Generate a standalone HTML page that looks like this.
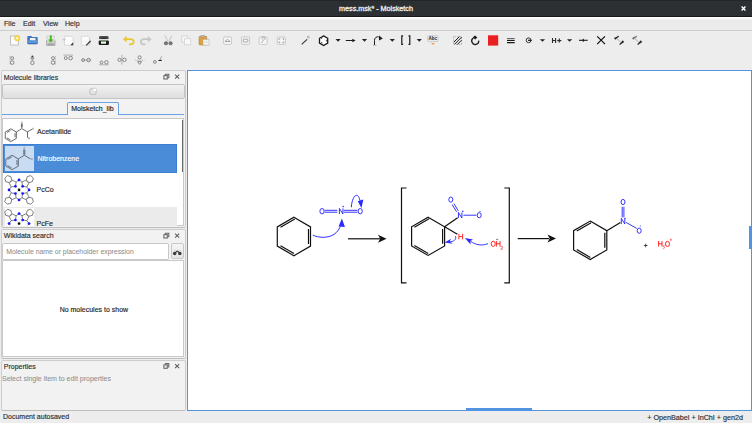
<!DOCTYPE html>
<html><head><meta charset="utf-8">
<style>
*{margin:0;padding:0;box-sizing:border-box}
html,body{width:752px;height:423px;overflow:hidden;background:#ededed;font-family:"Liberation Sans",sans-serif;font-size:7px;color:#2e2e2e;-webkit-text-stroke:0.15px currentColor}
.a{position:absolute}
svg{position:absolute;overflow:visible}
#title{left:0;top:0;width:752px;height:17px;background:#2c3033;border-bottom:1px solid #17191b;box-shadow:inset 0 1px 0 #23272a}
#title .t{left:0;width:752px;top:3.6px;text-align:center;color:#e8e8e8;font-size:7.2px;line-height:10px;padding-left:0;-webkit-text-stroke:0.35px #e8e8e8}
#menubar{left:0;top:17px;width:752px;height:14px;background:linear-gradient(#fefefe 0,#f9f9f9 1.6px,#ebebeb 3.2px);border-bottom:1px solid #cdcdcd}
.menu{top:19.2px;font-size:7.1px;line-height:10px;color:#303030}
.dock{background:#f2f2f2;border:1px solid #cdcdcd;border-bottom-color:#bdbdbd;border-radius:2px}
.dtitle{font-size:7px;line-height:9px;color:#2e2e2e}
.btn{background:linear-gradient(#f2f2f2,#dedede);border:1px solid #c4c4c4;border-radius:2px}
.btn2{background:linear-gradient(#f6f6f6,#e4e4e4);border:1px solid #c8c8c8;border-radius:2px}
.tab{background:#f3f3f3;border:1px solid #6aa2e4;border-bottom:none;border-radius:2px 2px 0 0;font-size:7px;line-height:9px;padding:1.2px 0 0 3px;color:#222}
.list{background:#fff;border:1px solid #c9c9c9}
.item{font-size:7px;line-height:9px;color:#1e1e1e}
.input{background:#fff;border:1px solid #c9c9c9;border-radius:2px;font-size:7px;line-height:16px;padding-left:2.8px;color:#8d8d8d;-webkit-text-stroke:0.05px #8d8d8d}
.canvas{left:187px;top:70px;width:565px;height:341px;background:#fff;border:1px solid #5294e2}
.status{font-size:7px;line-height:9px;color:#2e2e2e}
</style></head><body>
<div id="title" class="a"><div class="t a">mess.msk* - Molsketch</div>
<svg style="left:741px;top:6px" width="5" height="5" viewBox="0 0 5 5"><path d="M0.6 0.6L4.4 4.4M4.4 0.6L0.6 4.4" stroke="#fff" stroke-width="1.4"/></svg>
</div>
<div id="menubar" class="a"></div>
<div class="a menu" style="left:4px">File</div>
<div class="a menu" style="left:23px">Edit</div>
<div class="a menu" style="left:43px">View</div>
<div class="a menu" style="left:65px">Help</div>

<!-- toolbar 1 -->
<svg style="left:0;top:0" width="752" height="70" viewBox="0 0 752 70">
 <!-- new -->
 <rect x="10.5" y="36" width="8" height="9" fill="#fafafa" stroke="#b5b5b5" stroke-width="0.8"/>
 <circle cx="17.2" cy="38.2" r="2.6" fill="#f5e050" stroke="#e8c820" stroke-width="0.7"/>
 <circle cx="17.2" cy="38.2" r="1.1" fill="#fffbe0"/>
 <!-- open -->
 <path d="M27.3 36.9q0-1 1-1h3l0.9 1h4.6q0.9 0 0.9 0.9v5.6h-10.4z" fill="#3d76c0"/>
 <rect x="29.9" y="38" width="5.6" height="2.8" fill="#f4f2ea"/>
 <path d="M27.2 40.2h10.6l-0.5 3.9h-9.6z" fill="#5b94d8"/>
 <path d="M27.8 43.8h9.5" stroke="#2c5ea6" stroke-width="0.9"/>
 <!-- save -->
 <path d="M46.5 40.5h8.5v5h-8.5z" fill="#cfcfcf" stroke="#9a9a9a" stroke-width="0.7"/>
 <rect x="47" y="36" width="7.5" height="5" fill="#e9e9e9" stroke="#bbb" stroke-width="0.5"/>
 <path d="M50.8 35.3v5.2" stroke="#44bb22" stroke-width="2"/>
 <path d="M48 39.5h5.6l-2.8 3z" fill="#44bb22"/>
 <rect x="47.8" y="43.6" width="6" height="1" fill="#888"/>
 <!-- import -->
 <path d="M64.5 36.2h7.5l1.2 1.2v7.8h-8.7z" fill="#fbfbfb" stroke="#c8c8c8" stroke-width="0.6"/>
 <path d="M63 39.6h3M64.3 38.3l-1.3 1.3 1.3 1.3" stroke="#bbb" stroke-width="0.6" fill="none"/>
 <path d="M70.3 45.2l2.9-2.9v2.9z" fill="#333"/>
 <!-- export -->
 <path d="M81.3 36.2h7l1.4 1.4v7.6h-8.4z" fill="#fbfbfb" stroke="#c8c8c8" stroke-width="0.6"/>
 <path d="M88.5 38.6l1.5 1.5-1.5 1.5" stroke="#bbb" stroke-width="0.6" fill="none"/>
 <path d="M86.2 45.4l4.4-4.4" stroke="#333" stroke-width="1.2"/>
 <!-- print -->
 <rect x="99" y="36.1" width="9.6" height="3.4" rx="1.3" fill="#505050"/>
 <rect x="101.3" y="37.7" width="5.2" height="0.9" fill="#1a1a1a"/>
 <rect x="98.7" y="39.2" width="10.2" height="1.4" fill="#f2f2f2"/>
 <rect x="98.7" y="40.5" width="10.2" height="4.5" rx="0.9" fill="#1c1c1c"/>
 <rect x="101" y="41.4" width="5" height="2.3" fill="#fafafa"/>
 <path d="M101.8 41.6h2.8" stroke="#48b038" stroke-width="0.7"/>
 <!-- undo -->
 <path d="M125.5 39.2h5c2.2 0 3.2 1.3 3.2 2.6s-1 2.5-3.2 2.5h-1.5" fill="none" stroke="#e8c832" stroke-width="1.8"/>
 <path d="M123 39.2l3.6-3.2v6.4z" fill="#e8c832"/>
 <!-- redo -->
 <path d="M149 39.2h-5c-2.2 0-3.2 1.3-3.2 2.6s1 2.5 3.2 2.5h1.5" fill="none" stroke="#c6c6c6" stroke-width="1.8"/>
 <path d="M151.5 39.2l-3.6-3.2v6.4z" fill="#c6c6c6"/>
 <!-- cut -->
 <path d="M165 35.5l3 6M171.8 35.5l-3 6" stroke="#c0c0c0" stroke-width="0.9"/>
 <circle cx="166" cy="43.3" r="1.7" fill="#777" stroke="#555" stroke-width="0.5"/>
 <circle cx="170.6" cy="43.3" r="1.7" fill="#777" stroke="#555" stroke-width="0.5"/>
 <!-- copy -->
 <rect x="181.5" y="36" width="6.3" height="6" fill="#f4f4f4" stroke="#cfcfcf" stroke-width="0.7"/>
 <rect x="184.4" y="38.8" width="6.3" height="6" fill="#f8f8f8" stroke="#cfcfcf" stroke-width="0.7"/>
 <!-- paste -->
 <rect x="199" y="36.3" width="7.8" height="8.7" rx="0.8" fill="#e0a040" stroke="#b77a20" stroke-width="0.5"/>
 <rect x="201" y="35.5" width="3.6" height="1.8" fill="#bbb" stroke="#888" stroke-width="0.4"/>
 <rect x="203" y="39.5" width="6" height="5.6" fill="#f6f6f6" stroke="#aaa" stroke-width="0.5"/>
 <path d="M204.2 41.3h3.6M204.2 42.7h3.6" stroke="#bbb" stroke-width="0.4"/>
 <!-- zoom boxes -->
 <g fill="#f6f6f6" stroke="#b9b9b9" stroke-width="0.7">
  <rect x="223.6" y="36.9" width="8" height="7.5" rx="1.2"/>
  <rect x="241.6" y="36.9" width="8" height="7.5" rx="1.2"/>
  <rect x="259.2" y="36.9" width="8" height="7.5" rx="1.2"/>
  <rect x="277.3" y="36.9" width="8" height="7.5" rx="1.2"/>
 </g>
 <g fill="none" stroke="#777" stroke-width="0.6">
  <path d="M225 41.5l2.6-2.2 2.6 2.2M225 41.5h5.2"/>
  <rect x="243.3" y="39.2" width="4.6" height="2.8" rx="0.6"/>
  <path d="M261.5 42.8l2.5-3.5M262.3 39.4a1.6 1.6 0 1 1 2.4 0.3"/>
  <path d="M279 38.7h1.3M279 38.7v1.3M283.6 38.7h-1.3M283.6 38.7v1.3M279 42.7h1.3M279 42.7v-1.3M283.6 42.7h-1.3M283.6 42.7v-1.3"/>
 </g>
 <!-- wand -->
 <path d="M301.7 44.3l5.4-5" stroke="#333" stroke-width="1.1"/>
 <circle cx="308.3" cy="37.2" r="1" fill="none" stroke="#888" stroke-width="0.6"/>
 <!-- hexagon -->
 <path d="M323.6 35.9l4.1 2.4v4.8l-4.1 2.4-4.1-2.4v-4.8z" fill="#fff" stroke="#1a1a1a" stroke-width="1.3"/>
 <path d="M321 38.6l1.4-0.8M326.4 39.8v1.6M322.4 43.2l-1.4-0.8" stroke="#1a1a1a" stroke-width="0.8"/>
 <!-- triangles -->
 <g fill="#222">
  <path d="M335.5 39h5.2l-2.6 2.8z"/>
  <path d="M361.9 39h5.2l-2.6 2.8z"/>
  <path d="M389.7 39h5.2l-2.6 2.8z"/>
  <path d="M416.7 39h5.2l-2.6 2.8z"/>
  <path d="M539.9 39.2h5.2l-2.6 2.6z"/>
  <path d="M567 39.2h5.2l-2.6 2.6z"/>
 </g>
 <!-- arrow -->
 <path d="M345.8 40.5h7" stroke="#1a1a1a" stroke-width="1"/>
 <path d="M355.6 40.5l-3.3-1.8v3.6z" fill="#1a1a1a"/>
 <!-- curved arrow -->
 <path d="M374.5 45v-4.5c0-3 2-4 4.2-3.6" fill="none" stroke="#1a1a1a" stroke-width="1"/>
 <path d="M382.8 38.5l-3.8-3v5z" fill="#1a1a1a"/>
 <path d="M373.4 45.3h0.9M375.4 45.3h0.9" stroke="#555" stroke-width="0.6"/>
 <!-- brackets -->
 <path d="M403.1 35.9h-1.3v8.5h1.3M408.5 35.9h1.3v8.5h-1.3" fill="none" stroke="#1a1a1a" stroke-width="1.2"/>
 <!-- Abc -->
 <rect x="427.7" y="35.7" width="10.4" height="5.9" rx="1" fill="#ececec" stroke="#b8b8b8" stroke-width="0.6"/>
 <text x="428.5" y="40.4" font-size="4.5" font-weight="bold" fill="#222" font-family="Liberation Sans" style="-webkit-text-stroke:0">Abc</text>
 <path d="M430.9 42.5L433 44.9L435.1 42.5L433 43.5Z" fill="#f08a24"/>
 <!-- hatched -->
 <rect x="453.6" y="36.6" width="8" height="7.8" fill="none" stroke="#777" stroke-width="0.6" stroke-dasharray="0.8 0.8"/>
 <path d="M453.8 42.2l5.6-5.6M454.6 44.2l7-7M457.2 44.6l4.4-4.4" stroke="#1a1a1a" stroke-width="1"/>
 <!-- rotate -->
 <path d="M478.7 40.6A3.5 3.5 0 1 1 473.4 38" fill="none" stroke="#1a1a1a" stroke-width="1.3"/>
 <path d="M472.8 37.3l2.2-1.9 2.3 2.1-2.2 2z" fill="#1a1a1a"/>
 <!-- red square -->
 <rect x="488" y="35.3" width="10.2" height="10.3" fill="#ea1f1f"/>
 <!-- lines -->
 <path d="M507 38.7h7.7" stroke="#1a1a1a" stroke-width="0.8"/>
 <path d="M507 40.5h7.7M507 42.6h7.7" stroke="#1a1a1a" stroke-width="1.2"/>
 <!-- charge -->
 <circle cx="528.6" cy="40.3" r="2.4" fill="none" stroke="#222" stroke-width="0.9"/>
 <path d="M528 40.3h3.6" stroke="#111" stroke-width="1.2"/>
 <!-- H+ -->
 <path d="M552.5 38v5M555.6 38v5M552.5 40.5h3.1M557.3 40.6h4M559.3 38.6v4" stroke="#2a2a2a" stroke-width="1.1" fill="none"/>
 <!-- bond -->
 <path d="M579 40.3h8.7" stroke="#1a1a1a" stroke-width="1.1"/>
 <path d="M583.2 38.4l1 1.9-1 1.9-1-1.9z" fill="#1a1a1a"/>
 <!-- X -->
 <path d="M597.2 36.4q4 3.8 7.8 7.7M605 36.4q-4 3.8-7.8 7.7" stroke="#111" stroke-width="1.25" fill="none"/>
 <!-- flips -->
 <path d="M615.20 39.82L619.15 36.48L618.65 35.72L614.00 37.98Z" fill="#2a2a2a"/>
 <path d="M622.77 40.28L619.30 44.27L619.90 44.93L624.23 41.92Z" fill="#2a2a2a"/>
 <path d="M617.3 38.9L620.9 42.3" stroke="#555" stroke-width="0.7" stroke-dasharray="0.9 0.6"/>
 <path d="M633.20 39.82L637.15 36.48L636.65 35.72L632.00 37.98Z" fill="#707070"/>
 <path d="M640.77 40.28L637.30 44.27L637.90 44.93L642.23 41.92Z" fill="#2a2a2a"/>
 <path d="M635.3 38.9L638.9 42.3" stroke="#555" stroke-width="0.7" stroke-dasharray="0.9 0.6"/>
 <!-- toolbar 2: align icons -->
 <g fill="none" stroke="#707070" stroke-width="0.8">
  <circle cx="12.2" cy="58.2" r="1.5"/><circle cx="12.2" cy="62.6" r="1.8"/>
  <circle cx="32.4" cy="58.2" r="1.4"/><circle cx="32.4" cy="62.8" r="1.8"/>
  <circle cx="53" cy="58.2" r="1.5"/><circle cx="53" cy="62.6" r="1.8"/>
  <circle cx="65.8" cy="58.1" r="1.5"/><circle cx="70.6" cy="58.1" r="1.8"/>
  <circle cx="83.2" cy="60.1" r="1.5"/><circle cx="88.6" cy="60.1" r="1.8"/>
  <circle cx="101.5" cy="62.4" r="1.4"/><circle cx="106.4" cy="62.3" r="1.75"/>
  <circle cx="119.5" cy="59.8" r="1.6"/><circle cx="124.4" cy="59.8" r="1.75"/>
  <circle cx="139.6" cy="57.4" r="1.6"/><path d="M137.6 61.6h4l-2 2.8z"/>
  <circle cx="154.9" cy="61.9" r="1.4"/>
 </g>
 <g fill="none" stroke="#888" stroke-width="0.6">
  <path d="M10 56v9" stroke-dasharray="1 0.7"/>
  <path d="M32.4 56v4.6"/>
  <path d="M55.4 56v9" stroke-dasharray="1 0.7"/>
  <path d="M63.4 55.1h9.7"/>
  <path d="M81 60.1h10.2"/>
  <path d="M99 64.8h9.7"/>
  <path d="M121.9 54.8v9.9"/>
  <path d="M134.8 60.2h9.6" stroke-dasharray="1 0.8"/>
 </g>
 <circle cx="32.4" cy="56.3" r="0.9" fill="#333"/>
 <ellipse cx="160.1" cy="60.4" rx="1.9" ry="0.6" fill="#222"/>
 <path d="M160.2 60.1L161.5 56.4" stroke="#999" stroke-width="0.9"/>
</svg>

<!-- left docks -->
<div class="a dock" style="left:1px;top:70px;width:185px;height:158px"></div>
<div class="a dtitle" style="left:3.7px;top:73px">Molecule libraries</div>
<div class="a btn" style="left:2px;top:84px;width:182.5px;height:14.5px"></div>
<svg style="left:0;top:0" width="200" height="423" viewBox="0 0 200 423">
 <!-- refresh icon -->
 <circle cx="93" cy="91.5" r="3.3" fill="none" stroke="#c4c4c4" stroke-width="1.1"/>
 <circle cx="94.6" cy="90" r="1.9" fill="#fff" stroke="#c4c4c4" stroke-width="0.6"/>
</svg>
<!-- tabs -->
<div class="a" style="left:2px;top:113.8px;width:182px;height:1.2px;background:#6aa2e4"></div>
<div class="a tab" style="left:67.2px;top:102.2px;width:51.6px;height:12.8px">Molsketch_lib</div>
<!-- list -->
<div class="a list" style="left:2.4px;top:118px;width:181.6px;height:107.8px"></div>
<div class="a" style="left:3.1px;top:144px;width:173.6px;height:28.6px;background:#4a8cd8;border:1px solid #3b7fd2"></div>
<div class="a" style="left:4.9px;top:146px;width:29.3px;height:24.6px;background:#c9dcf1"></div>
<div class="a" style="left:3.1px;top:207px;width:173.6px;height:18.5px;background:#ebebeb"></div>
<div class="a" style="left:4.5px;top:208px;width:29.5px;height:17.5px;background:#fff"></div>
<div class="a" style="left:182px;top:119.5px;width:1.4px;height:52.5px;background:#6a6a6a"></div>
<div class="a item" style="left:37px;top:127px">Acetanilide</div>
<div class="a item" style="left:37.5px;top:154px;color:#fff">Nitrobenzene</div>
<div class="a item" style="left:36.6px;top:185.2px">PcCo</div>
<div class="a" style="left:2.5px;top:118.3px;width:181.5px;height:107.5px;overflow:hidden"><div class="a item" style="left:34.1px;top:101.2px">PcFe</div></div>
<svg style="left:0;top:0" width="200" height="423" viewBox="0 0 200 423">
 <g fill="none" stroke="#3a3a3a" stroke-width="0.75">
  <path d="M10.80 128.80L16.34 132.00L16.34 138.40L10.80 141.60L5.26 138.40L5.26 132.00Z"/>
  <path d="M6.95 132.53L10.41 130.53 M15.04 133.20L15.04 137.20 M10.41 139.87L6.95 137.87"/>
  <path d="M16.34 132L21.8 128.6L27.5 131.9L32.3 129M27.5 131.9V137.8"/>
  <path d="M21.4 127.6V123.5M22.2 127.6V123.5"/>
 </g>
 <g fill="none" stroke="#404a5a" stroke-width="0.75">
  <path d="M12.05 155.30L18.29 158.90L18.29 166.10L12.05 169.70L5.81 166.10L5.81 158.90Z"/>
  <path d="M7.50 159.43L11.66 157.03 M16.99 160.10L16.99 164.90 M11.66 167.97L7.50 165.57"/>
  <path d="M18.29 158.9L24.3 155.3L30.5 158.9M23.8 154.8V149.5M24.8 154.8V149.5"/>
 </g>
 <g fill="#aaa"><rect x="23.4" y="147" width="1.6" height="1.8"/><rect x="30.8" y="158" width="2" height="1.8"/><rect x="28" y="137.5" width="2" height="1.6"/><rect x="32.3" y="127.8" width="1.4" height="1.8"/><rect x="21.2" y="121.6" width="1.4" height="1.6"/></g>
</svg>
<svg style="left:0;top:0" width="200" height="423" viewBox="0 0 200 423">
 <defs>
  <g id="pc">
   <path d="M3.61 3.61L7.79 2.94L9.71 6.71L6.71 9.71L2.94 7.79L3.61 3.61 M9.87 7.33L13.35 8.26L14.28 11.73L11.73 14.28L8.26 13.35L7.33 9.87L9.87 7.33 M-3.61 3.61L-2.94 7.79L-6.71 9.71L-9.71 6.71L-7.79 2.94L-3.61 3.61 M-7.33 9.87L-8.26 13.35L-11.73 14.28L-14.28 11.73L-13.35 8.26L-9.87 7.33L-7.33 9.87 M-3.61 -3.61L-7.79 -2.94L-9.71 -6.71L-6.71 -9.71L-2.94 -7.79L-3.61 -3.61 M-9.87 -7.33L-13.35 -8.26L-14.28 -11.73L-11.73 -14.28L-8.26 -13.35L-7.33 -9.87L-9.87 -7.33 M3.61 -3.61L2.94 -7.79L6.71 -9.71L9.71 -6.71L7.79 -2.94L3.61 -3.61 M7.33 -9.87L8.26 -13.35L11.73 -14.28L14.28 -11.73L13.35 -8.26L9.87 -7.33L7.33 -9.87 M2.94 7.79L0.00 10.00L-2.94 7.79 M-7.79 2.94L-10.00 0.00L-7.79 -2.94 M-2.94 -7.79L-0.00 -10.00L2.94 -7.79 M7.79 -2.94L10.00 -0.00L7.79 2.94" fill="none" stroke="#555" stroke-width="0.75"/>
   <path d="M-3.6 -3.6L3.6 3.6M3.6 -3.6L-3.6 3.6" fill="none" stroke="#c8c8a8" stroke-width="0.5"/>
   <g fill="#1414ff">
    <circle cx="-3.6" cy="-3.6" r="1.35"/><circle cx="3.6" cy="-3.6" r="1.35"/>
    <circle cx="-3.6" cy="3.6" r="1.35"/><circle cx="3.6" cy="3.6" r="1.35"/>
    <circle cx="0" cy="-10" r="1.35"/><circle cx="0" cy="10" r="1.35"/>
    <circle cx="-10" cy="0" r="1.35"/><circle cx="10" cy="0" r="1.35"/>
   </g>
   <circle cx="0" cy="0" r="1.3" fill="#111"/>
  </g>
  <clipPath id="lc"><rect x="2.5" y="118.3" width="181.5" height="107"/></clipPath>
 </defs>
 <use href="#pc" x="19.05" y="189.9"/>
 <g clip-path="url(#lc)"><use href="#pc" x="19.05" y="223.6"/></g>
</svg>

<div class="a dock" style="left:1px;top:229px;width:185px;height:129.5px"></div>
<div class="a dtitle" style="left:3.8px;top:230.5px">Wikidata search</div>
<div class="a input" style="left:2.4px;top:243px;width:167.1px;height:16.5px;font-size:6.9px">Molecule name or placeholder expression</div>
<div class="a btn2" style="left:170.6px;top:243px;width:13.3px;height:16.4px"></div>
<svg style="left:0;top:0" width="200" height="423" viewBox="0 0 200 423">
 <path d="M173.4 252.6Q174.6 247.6 176.4 252M178.2 252Q180 247.6 181.2 252.6" fill="none" stroke="#d2d2d2" stroke-width="0.9"/><g fill="#3a3a3a"><circle cx="174.7" cy="253.4" r="1.75"/><circle cx="179.8" cy="253.4" r="1.75"/></g><path d="M175.6 252.8Q177.25 249.4 178.9 252.8" fill="none" stroke="#3a3a3a" stroke-width="1.1"/>
</svg>
<div class="a list" style="left:2.4px;top:260.2px;width:181.6px;height:96.6px"></div>
<div class="a item" style="left:0.9px;width:186px;text-align:center;top:304.5px">No molecules to show</div>

<div class="a dock" style="left:1px;top:360px;width:185px;height:50.5px"></div>
<div class="a dtitle" style="left:3.8px;top:361.5px">Properties</div>
<div class="a item" style="left:2px;top:373.5px;color:#8d8d8d;-webkit-text-stroke:0.05px #8d8d8d">Select single item to edit properties</div>

<svg style="left:0;top:0" width="200" height="423" viewBox="0 0 200 423">
 <g fill="none" stroke="#6a6a6a" stroke-width="1.1">
  <rect x="163.9" y="75.6" width="3.4" height="3.4"/>
  <path d="M165.4 75.1v-0.8h3.4v3.4h-0.9"/>
  <rect x="163.9" y="234.6" width="3.4" height="3.4"/>
  <path d="M165.4 234.1v-0.8h3.4v3.4h-0.9"/>
  <rect x="163.9" y="364.9" width="3.4" height="3.4"/>
  <path d="M165.4 364.4v-0.8h3.4v3.4h-0.9"/>
 </g>
 <g stroke="#5e5e5e" stroke-width="1.05">
  <path d="M175.1 74.6l4.1 4.1M179.2 74.6l-4.1 4.1"/>
  <path d="M175.1 233.6l4.1 4.1M179.2 233.6l-4.1 4.1"/>
  <path d="M175.1 364.1l4.1 4.1M179.2 364.1l-4.1 4.1"/>
 </g>
</svg>
<div class="a canvas"></div>
<div class="a" style="left:749px;top:226px;width:3px;height:23px;background:#5294e2"></div>
<div class="a" style="left:466px;top:408px;width:65.5px;height:3px;background:#5294e2"></div>


<!-- canvas drawing -->
<svg style="left:0;top:0" width="752" height="423" viewBox="0 0 752 423">
 <g fill="none" stroke="#111" stroke-width="1.2" stroke-linecap="butt" stroke-linejoin="miter">
  <!-- benzene 1 -->
  <path d="M293.9 217.3L310.5 226.9L310.5 246.1L293.9 255.7L277.3 246.1L277.3 226.9Z"/>
  <path d="M279.6 225.6L293.9 217.3" transform="translate(0.9 1.6)"/>
  <path d="M308.5 229.0L308.5 244.0"/>
  <path d="M279.6 247.4L293.1 255.2" transform="translate(0.9 -1.6)"/>
  <!-- benzene 2 -->
  <path d="M428.1 217.2L444.6 226.8L444.6 245.9L428.1 255.4L411.6 245.9L411.6 226.8Z"/>
  <path d="M413.5 225.7L428.1 217.2" transform="translate(0.9 1.6)"/>
  <path d="M442.6 228.9L442.6 243.8"/>
  <path d="M413.5 247.0L427.3 255.0" transform="translate(0.9 -1.6)"/>
  <path d="M444.6 226.8L457.6 217.8"/>
  <path d="M444.6 226.8L457.4 234.2"/>
  <!-- benzene 3 -->
  <path d="M590.2 221.1L606.8 230.7L606.8 249.9L590.2 259.5L573.6 249.9L573.6 230.7Z"/>
  <path d="M575.9 229.4L590.2 221.1" transform="translate(0.9 1.6)"/>
  <path d="M604.8 232.8L604.8 247.8"/>
  <path d="M575.9 251.2L589.4 259.0" transform="translate(0.9 -1.6)"/>
  <path d="M606.8 230.7L620.4 222.6"/>
  <!-- arrows -->
  <path d="M348 238.8L380 238.8"/>
  <path d="M517.7 238.6L549 238.6"/>
  <!-- brackets -->
  <path d="M406.5 188L401.5 188L401.5 282.8L406.5 282.8"/>
  <path d="M504.3 188L509.3 188L509.3 282.8L504.3 282.8"/>
 </g>
 <g fill="#111">
  <path d="M386.5 238.8L378 234.8L380.2 238.8L378 242.8Z"/>
  <path d="M556 238.6L547.5 234.6L549.7 238.6L547.5 242.6Z"/>
 </g>
 <!-- blue atoms -->
 <g fill="none" stroke="#2a2aff" stroke-width="0.95">
  <ellipse cx="322" cy="211.2" rx="2.1" ry="2.7"/>
  <path d="M324.6 210.3H337.3M324.6 212.2H337.3"/>
  <path d="M339.4 214V208.4L342.9 214V208.4"/>
  <path d="M343.8 210.3H357.4M343.8 212.2H357.4"/>
  <ellipse cx="360.2" cy="211.2" rx="2.1" ry="2.7"/>
 </g>
 <circle cx="343.1" cy="206.6" r="0.8" fill="#2a2aff"/>
 <!-- curved arrows blue -->
 <g fill="none" stroke="#2a2aff" stroke-width="1">
  <path d="M312.8 235.1C320 238.5 335 239.5 340.3 226.5"/>
  <path d="M351.3 207.3C352 196 358 190 360.2 201.5"/>
 </g>
 <g fill="#2a2aff">
  <path d="M341.9 218.6L338.6 226.6L344.9 227.1Z"/>
  <path d="M361.4 208L357.8 201.2L363.4 199.6Z"/>
 </g>
 <!-- intermediate nitro -->
 <g fill="none" stroke="#2a2aff" stroke-width="0.95">
  <ellipse cx="450.8" cy="199.6" rx="2.0" ry="2.6"/>
  <path d="M452.2 204.6L456.6 211.8M453.9 203.6L458.3 210.8"/>
  <path d="M458.4 218V212.4L461.9 218V212.4"/>
  <path d="M463.4 215.2H476.4"/>
  <ellipse cx="479.2" cy="215.2" rx="2.0" ry="2.6"/>
  <path d="M455.4 236.2C456.8 239.5 453.5 241.9 449.6 241.8"/>
  <path d="M488 243.6C482 246 476 245.2 470.4 241.2"/>
 </g>
 <circle cx="462.8" cy="211.2" r="0.8" fill="#2a2aff"/>
 <circle cx="480" cy="211.5" r="0.6" fill="#2a2aff"/>
 <g fill="#2a2aff">
  <path d="M444.7 242.6L451 238.7L449.7 241.6L452.5 243.8Z"/>
  <path d="M464.9 238.1L473 239.5L470.3 241L470.6 244.6Z"/>
 </g>
 <!-- red H and OH2 -->
 <g fill="none" stroke="#ff2020" stroke-width="0.95">
  <path d="M458.9 233.8V239.4M462.6 233.8V239.4M458.9 236.6H462.6"/>
  <ellipse cx="493.2" cy="243.8" rx="2.0" ry="2.6"/>
  <path d="M496.4 241V246.6M500 241V246.6M496.4 243.8H500"/>
 </g>
 <path d="M496.1 239.4h2.1" stroke="#444" stroke-width="0.7"/>
 <path d="M500.6 246.6Q502.6 245.8 502.6 247Q502.6 248 500.8 249.2H503" fill="none" stroke="#ff2020" stroke-width="0.6"/>
 <!-- product nitro -->
 <g fill="none" stroke="#2a2aff" stroke-width="0.95">
  <ellipse cx="623" cy="202" rx="2.0" ry="2.6"/>
  <path d="M622.2 206.8V217.4M623.9 206.8V217.4"/>
  <path d="M621.3 224V218.4L624.8 224V218.4"/>
  <path d="M626.1 222.4L636.7 228.4"/>
  <ellipse cx="639.2" cy="230.7" rx="2.0" ry="2.6"/>
 </g>
 <circle cx="625" cy="218.4" r="0.7" fill="#2a2aff"/>
 <circle cx="640.4" cy="226" r="0.5" fill="#2a2aff"/>
 <!-- plus and H3O+ -->
 <path d="M643.9 245.5H647.5M645.7 243.7V247.3" stroke="#222" stroke-width="0.8"/>
 <g fill="none" stroke="#ff2020" stroke-width="0.95">
  <path d="M658.6 241V246.6M662 241V246.6M658.6 243.8H662"/>
  <ellipse cx="667.5" cy="243.9" rx="2.0" ry="2.6"/>
 </g>
 <path d="M662.8 245.6H664.6L663.4 246.8Q664.8 246.8 664.6 248Q664.2 249 662.8 248.6" fill="none" stroke="#ff2020" stroke-width="0.5"/>
 <path d="M669.8 239.8H671.8M670.8 238.8V240.8" stroke="#ff2020" stroke-width="0.6"/>
</svg>

<div class="a status" style="left:3px;top:412px">Document autosaved</div>
<div class="a status" style="left:647.3px;top:412.8px;font-size:7.2px">+ OpenBabel + InChI + gen2d</div>
</body></html>
